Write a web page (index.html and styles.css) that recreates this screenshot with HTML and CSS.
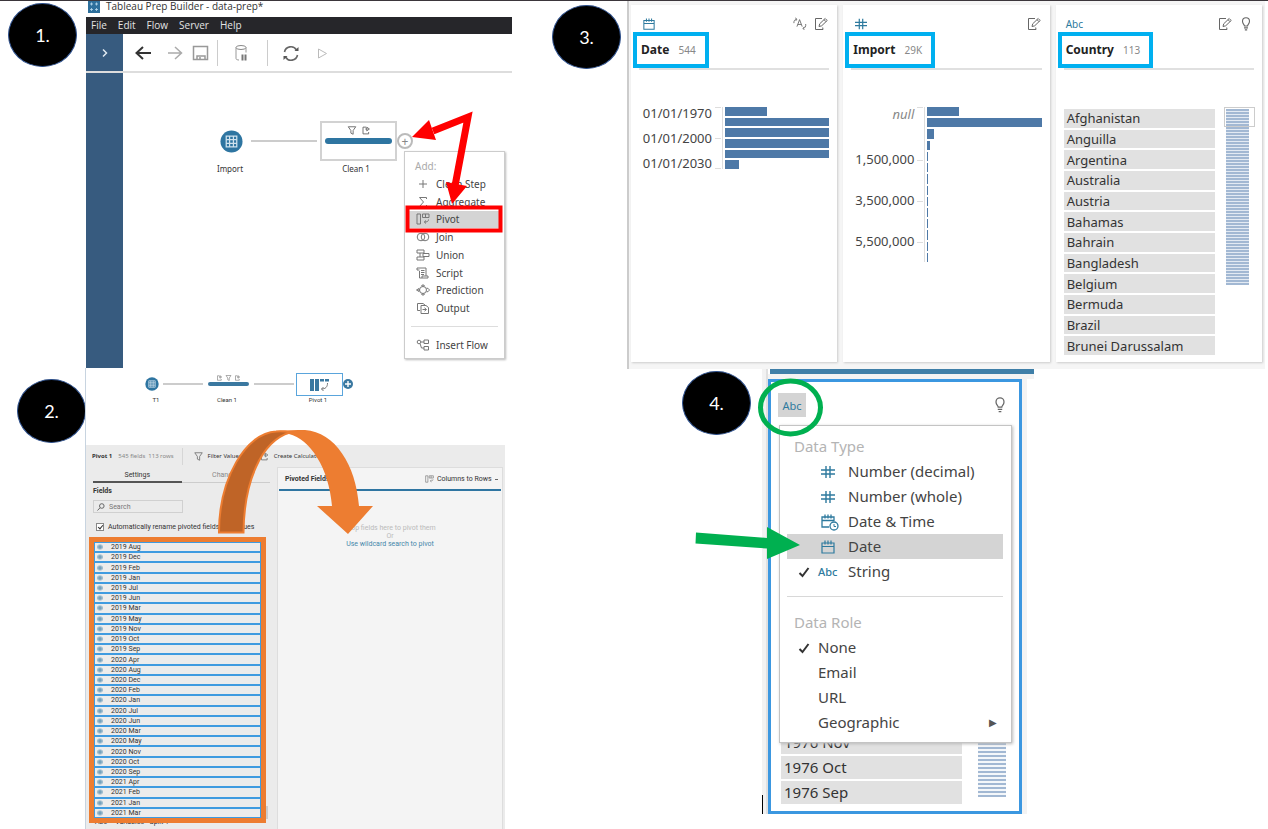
FILE: index.html
```html
<!DOCTYPE html>
<html lang="en">
<head>
<meta charset="utf-8">
<title>Tableau Prep Builder - data-prep</title>
<link rel="stylesheet" href="styles.css">
</head>
<body>
<svg class="defs" aria-hidden="true">
  <symbol id="i-hash" viewBox="0 0 14 14"><path d="M5 1v12M9 1v12M0 5h14M0 9h14" fill="none" stroke="currentColor" stroke-width="1.4"/></symbol>
  <symbol id="i-cal" viewBox="0 0 14 14"><path d="M1 3h12v10H1zM1 6.500h12M4 .5v4M7 .5v4M10 .5v4" fill="none" stroke="currentColor" stroke-width="1.2"/></symbol>
  <symbol id="i-caltime" viewBox="0 0 18 18"><path d="M8 14H1V4h12v4M1 7.500h12M4 1.500v4M7 1.500v4M10 1.500v4" fill="none" stroke="currentColor" stroke-width="1.3"/><circle cx="13" cy="13" r="4" fill="none" stroke="currentColor" stroke-width="1.3"/><path d="M13 11v2.500h2" fill="none" stroke="currentColor"/></symbol>
  <symbol id="i-edit" viewBox="0 0 14 14"><path d="M8 1.500H1.500v11H9l-.3-2M5 9.500l.7-2.700 5.500-5.300 2 2-5.500 5.300zM10 2.700l2 2" fill="none" stroke="currentColor"/></symbol>
  <symbol id="i-bulb" viewBox="0 0 12 18"><path d="M4 11.500c0-2-2.500-2.500-2.500-6a4.500 4.500 0 0 1 9 0c0 3.500-2.500 4-2.500 6zM3.500 14h5M4.500 16.500h3" fill="none" stroke="currentColor" stroke-width="1.4"/></symbol>
  <symbol id="i-rename" viewBox="0 0 16 14"><path d="M4.500 10 7.500 2l3 8M5.500 7.500h4M1 6c0-3 1-4 3-4.500M2.500 0 4.500 1.500 3 3.500M14.500 7c.3 3-.5 4.500-3 5M13 10.500 11.300 12l1.700 1.800" fill="none" stroke="currentColor"/></symbol>
  <symbol id="i-funnel" viewBox="0 0 12 12"><path d="M1 1h10L7.500 6v5l-3-1.500V6z" fill="none" stroke="currentColor" stroke-width="1.2"/></symbol>
  <symbol id="i-calc" viewBox="0 0 12 12"><path d="M6 1.500H2v9h7.500V8M7 1.500l3.500 2.500L7 6.500zM5 4h3" fill="none" stroke="currentColor" stroke-width="1.2"/></symbol>
  <symbol id="i-table" viewBox="0 0 24 24"><circle cx="12" cy="12" r="11.500" fill="#2e75a1"/><path d="M6.500 6.500h11v11h-11zM6.500 10h11M6.500 14h11M10 6.500v11M14 6.500v11" fill="none" stroke="#cfe2ee" stroke-width="1.3"/></symbol>
  <symbol id="i-pivot" viewBox="0 0 14 12"><path d="M1 1h3.500v10H1zM6.500 1H13v3.500H6.500zM9.500 1v3.500M12.500 6.500c0 2-1.500 2.500-4 2.500M10 7.500 8.300 9l1.700 1.500" fill="none" stroke="currentColor"/></symbol>
  <symbol id="i-plus" viewBox="0 0 14 12"><path d="M7 2v8M3 6h8" fill="none" stroke="currentColor"/></symbol>
  <symbol id="i-sum" viewBox="0 0 14 12"><path d="M10.500 3V1.500h-7L7.500 6l-4 4.500h7V9" fill="none" stroke="currentColor"/></symbol>
  <symbol id="i-join" viewBox="0 0 14 12"><circle cx="5" cy="6" r="3.800" fill="none" stroke="currentColor"/><circle cx="9" cy="6" r="3.800" fill="none" stroke="currentColor"/></symbol>
  <symbol id="i-union" viewBox="0 0 14 12"><path d="M1 1h7v3H1zM1 8h7v3H1zM7 4.500h6v3H7zM4 4v4" fill="none" stroke="currentColor"/></symbol>
  <symbol id="i-script" viewBox="0 0 14 12"><path d="M3.500 4V11H12V9H6v2M3.500 3H1V1h9v8M5 3.500h3.500M5 5.500h3.500M5 7.500h3" fill="none" stroke="currentColor"/></symbol>
  <symbol id="i-predict" viewBox="0 0 14 12"><circle cx="7" cy="6" r="3.500" fill="none" stroke="currentColor"/><path d="M7 .5 5.500 2h3zM7 11.500 5.500 10h3zM.5 6 3 4.500v3zM10.500 4.300h1.500L13.500 6 12 7.700h-1.500" fill="none" stroke="currentColor"/></symbol>
  <symbol id="i-output" viewBox="0 0 14 12"><path d="M4 8.500H1.500v-7H7L9 3M5 3.500h5l2.500 2v6H5zM6.500 7.500H10M8.500 5.800l2 1.700-2 1.700" fill="none" stroke="currentColor"/></symbol>
  <symbol id="i-insert" viewBox="0 0 14 12"><circle cx="3" cy="3" r="1.800" fill="none" stroke="currentColor"/><path d="M8 1h4.500v3.500H8zM8 7.500h4.500V11H8zM5 3h3M4 4.500 5.500 9H8" fill="none" stroke="currentColor"/></symbol>
  <symbol id="i-check" viewBox="0 0 12 12"><path d="M1.500 7 4.500 10 10.500 2" fill="none" stroke="currentColor" stroke-width="2"/></symbol>
</svg>
<main class="board">
  <div class="column">
    <section class="step step-one">
      <div class="badge">1.</div>
      <div class="window">
        <header class="titlebar">
          <svg class="app-icon" viewBox="0 0 12 12"><rect width="12" height="12" fill="#2d6f9c"/><path d="M2 3h3M3.500 1.500v3M7 3h3M8.500 1.500v3M2 8.500h3M3.500 7v3M7 8.500h3M8.500 7v3" stroke="#b9dbef" stroke-width=".8"/></svg>
          <span>Tableau Prep Builder - data-prep*</span>
        </header>
        <nav class="menubar"><button>File</button><button>Edit</button><button>Flow</button><button>Server</button><button>Help</button></nav>
        <div class="toolbar">
          <button class="expand" aria-label="Expand"><svg viewBox="0 0 8 10" width="8" height="10"><path d="M2 1.500 5.500 5 2 8.500" fill="none" stroke="#dfe8f0" stroke-width="1.500"/></svg></button>
          <svg class="tools" viewBox="123 34 240 37" width="240" height="37" fill="none">
            <path d="M151 53h-14M143 47l-6.500 6 6.500 6" stroke="#333" stroke-width="2"/>
            <path d="M168 53h13M175 47l6.500 6-6.500 6" stroke="#aaa" stroke-width="1.500"/>
            <path d="M193.500 46.500h14v13h-14zM197 60v-4h8v4M200 57v3" stroke="#999" stroke-width="1.500"/>
            <path d="M217.500 40v26M267.500 40v26" stroke="#ccc"/>
            <ellipse cx="241" cy="47.500" rx="5" ry="2" stroke="#888"/><path d="M236 47.500v11c0 1 1.500 1.500 3 1.500M246 47.500v5" stroke="#999"/><path d="M242.500 54.500v6M245.500 54.500v6" stroke="#777" stroke-width="2"/>
            <path d="M284.500 52a6.500 6.500 0 0 1 12-2M297.500 55a6.500 6.500 0 0 1-12 2" stroke="#666" stroke-width="1.600"/><path d="M298.500 47v4h-4zM283.500 60v-4h4z" fill="#555"/>
            <path d="M318.500 49l8 4.500-8 4.500z" stroke="#bbb"/>
          </svg>
        </div>
        <div class="workspace">
          <div class="rail"></div>
          <div class="canvas canvas-one">
            <svg class="node import-node"><use href="#i-table"/></svg>
            <span class="node-label import-label">Import</span>
            <span class="edge edge-one"></span>
            <div class="clean-node">
              <span class="clean-icons"><svg><use href="#i-funnel"/></svg><svg><use href="#i-calc"/></svg></span>
              <span class="clean-bar"></span>
            </div>
            <span class="node-label clean-label">Clean 1</span>
            <button class="add" aria-label="Add step">+</button>
            <div class="add-menu">
              <h2>Add:</h2>
              <div class="add-items">
                <button><svg><use href="#i-plus"/></svg>Clean Step</button>
                <button><svg><use href="#i-sum"/></svg>Aggregate</button>
                <button class="chosen"><svg><use href="#i-pivot"/></svg>Pivot</button>
                <button><svg><use href="#i-join"/></svg>Join</button>
                <button><svg><use href="#i-union"/></svg>Union</button>
                <button><svg><use href="#i-script"/></svg>Script</button>
                <button><svg><use href="#i-predict"/></svg>Prediction</button>
                <button><svg><use href="#i-output"/></svg>Output</button>
              </div>
              <div class="add-items insert"><button><svg><use href="#i-insert"/></svg>Insert Flow</button></div>
            </div>
            <svg class="marks" viewBox="123 73 389 295" width="389" height="295">
              <rect x="407.500" y="207.500" width="93" height="23" fill="none" stroke="#f00" stroke-width="4"/>
              <path d="M433 131 468 117 455 186" fill="none" stroke="#f00" stroke-width="7"/>
              <path d="M412 137 429 120 436 140zM452 204 446 182 467 186z" fill="#f00"/>
            </svg>
          </div>
        </div>
      </div>
    </section>
    <section class="step step-two">
      <div class="badge">2.</div>
      <div class="prep">
        <div class="canvas canvas-two">
          <svg class="node t1-node"><use href="#i-table"/></svg>
          <span class="node-label t1-label">T1</span>
          <span class="edge edge-a"></span>
          <span class="mini-icons"><svg><use href="#i-calc"/></svg><svg><use href="#i-funnel"/></svg><svg><use href="#i-calc"/></svg></span>
          <span class="mini-bar"></span>
          <span class="node-label clean2-label">Clean 1</span>
          <span class="edge edge-b"></span>
          <div class="pivot-node"><svg viewBox="0 0 20 14" width="20" height="14"><path d="M0 1h4v12H0zM5 1h4v12H5zM10 1h4v2.500h-4zM15 1h4v2.500h-4z" fill="#3a78a0"/><path d="M17.500 5c0 4-2 6-6 6M13.500 9l-2 2 2 2" fill="none" stroke="#777"/></svg></div>
          <svg class="node plus-node" viewBox="0 0 10 10"><circle cx="5" cy="5" r="5" fill="#3a78a0"/><path d="M5 2v6M2 5h6" stroke="#fff" stroke-width="1.400"/></svg>
          <span class="node-label pivot-label">Pivot 1</span>
        </div>
        <header class="profile-bar">
          <strong>Pivot 1</strong><span class="meta">545 fields</span><span class="meta">113 rows</span>
          <button class="filter"><svg><use href="#i-funnel"/></svg>Filter Values</button>
          <button><svg><use href="#i-calc"/></svg>Create Calculated</button>
        </header>
        <div class="panes">
          <div class="settings">
            <nav class="tabs"><button class="on">Settings</button><button>Changes</button></nav>
            <label class="fields-title" for="search">Fields</label>
            <div class="search"><svg viewBox="0 0 8 8" width="8" height="8"><circle cx="4.800" cy="3" r="2.300" fill="none" stroke="#666"/><path d="M3 4.800.5 7.500" stroke="#666"/></svg><input id="search" type="text" placeholder="Search"></div>
            <label class="rename"><input type="checkbox" checked><span>Automatically rename pivoted fields and values</span></label>
            <div class="field-list" id="fields"></div>
            <div class="next-field"><span>Abc</span>Variables - Split 1</div>
            <span class="scroll-thumb"></span>
          </div>
          <div class="pivoted">
            <div class="pivoted-head"><strong>Pivoted Fields</strong>
              <label class="mode"><svg><use href="#i-pivot"/></svg><select aria-label="Pivot type"><option>Columns to Rows</option></select></label>
            </div>
            <div class="drop"><p>Drop fields here to pivot them</p><p>Or</p><a href="#search">Use wildcard search to pivot</a></div>
          </div>
        </div>
        <svg class="marks" viewBox="85 368 420 461" width="420" height="461">
          <path d="M276 431C286 430 296 430 305 430 335 432 356 465 359 506H373L348 534 317 506H332C329 468 310 439 289 434z" fill="#ed7d31"/>
          <path d="M219 532.500C219 478 246 433 276 431.500 281 431 286 431.500 290 432.500 261 441 244 482 243.500 532.500z" fill="#bf6427" stroke="#ed7d31" stroke-width="2"/>
        </svg>
      </div>
    </section>
  </div>
  <div class="column">
    <section class="step step-three">
      <div class="badge">3.</div>
      <div class="cards">
        <article class="card">
          <div class="card-top"><svg class="type"><use href="#i-cal"/></svg><span class="actions"><svg class="wide"><use href="#i-rename"/></svg><svg><use href="#i-edit"/></svg></span></div>
          <h2><span class="framed">Date <small>544</small></span></h2>
          <div class="chart date-chart">
            <div class="axis-labels"><span>01/01/1970</span><span>01/01/2000</span><span>01/01/2030</span></div>
            <div class="ticks"><i></i><i></i><i></i></div>
            <div class="bars" id="date-bars"></div>
          </div>
        </article>
        <article class="card">
          <div class="card-top"><svg class="type"><use href="#i-hash"/></svg><span class="actions"><svg><use href="#i-edit"/></svg></span></div>
          <h2><span class="framed">Import <small>29K</small></span></h2>
          <div class="chart import-chart">
            <div class="axis-labels"><em>null</em><span>1,500,000</span><span>3,500,000</span><span>5,500,000</span></div>
            <div class="ticks"><i></i><i></i><i></i><i></i></div>
            <div class="bars" id="import-bars"></div>
          </div>
        </article>
        <article class="card">
          <div class="card-top"><span class="abc">Abc</span><span class="actions"><svg><use href="#i-edit"/></svg><svg><use href="#i-bulb"/></svg></span></div>
          <h2><span class="framed">Country <small>113</small></span></h2>
          <div class="values">
            <div class="countries">
              <button>Afghanistan</button><button>Anguilla</button><button>Argentina</button><button>Australia</button><button>Austria</button><button>Bahamas</button><button>Bahrain</button><button>Bangladesh</button><button>Belgium</button><button>Bermuda</button><button>Brazil</button><button>Brunei Darussalam</button>
            </div>
            <div class="minimap"><span class="view"></span></div>
          </div>
        </article>
      </div>
    </section>
    <section class="step step-four">
      <div class="badge">4.</div>
      <div class="gutter"><span class="caret"></span></div>
      <div class="type-pane">
        <div class="blue-strip"></div>
        <div class="pane-row">
          <div class="type-card">
            <div class="type-top"><button class="abc-button">Abc</button><svg><use href="#i-bulb"/></svg></div>
            <div class="type-values">
              <div class="months"><button>1976 Nov</button><button>1976 Oct</button><button>1976 Sep</button></div>
              <div class="month-map"></div>
            </div>
            <div class="type-menu">
              <h2>Data Type</h2>
              <button><i></i><svg><use href="#i-hash"/></svg>Number (decimal)</button>
              <button><i></i><svg><use href="#i-hash"/></svg>Number (whole)</button>
              <button><i></i><svg class="big"><use href="#i-caltime"/></svg>Date &amp; Time</button>
              <button class="chosen"><i></i><svg><use href="#i-cal"/></svg>Date</button>
              <button><i><svg><use href="#i-check"/></svg></i><b>Abc</b>String</button>
              <hr>
              <h2>Data Role</h2>
              <button><i><svg><use href="#i-check"/></svg></i>None</button>
              <button><i></i>Email</button>
              <button><i></i>URL</button>
              <button><i></i>Geographic<span class="more">▶</span></button>
            </div>
          </div>
          <div class="next-card"></div>
        </div>
        <svg class="marks" viewBox="690 369 344 445" width="344" height="445">
          <ellipse cx="790.500" cy="407.500" rx="30" ry="26.500" fill="none" stroke="#00b050" stroke-width="5"/>
          <path d="M696 532.500 767 538V527L800 545 767 559V548.500L695.500 543.500z" fill="#00b050"/>
        </svg>
      </div>
    </section>
  </div>
</main>
<script src="app.js"></script>
</body>
</html>
```

FILE: styles.css
```css
* { box-sizing: border-box; }
body { margin: 0; background: #fff; color: #333; font-family: "Noto Sans", sans-serif; font-size: 13px; border-top: 1px solid #3b363b; }
button { margin: 0; padding: 0; border: 0; background: none; color: inherit; font: inherit; text-align: left; white-space: nowrap; }
h2, p { margin: 0; font-weight: normal; }
.defs { display: none; }
.marks { position: absolute; pointer-events: none; z-index: 2; }
.board { display: grid; grid-template-columns: 512px minmax(0, 1fr); }
.step { display: flex; align-items: flex-start; }
.badge { flex: none; width: 69px; height: 64px; border: 1px solid #2f528f; border-radius: 50%; background: #000; color: #fff; font: 18px/62px Lato, sans-serif; text-align: center; }

/* Step 1 */
.step-one .badge { margin: 2px 8px 0; }
.window { flex: 1; min-width: 0; margin-left: 1px; }
.titlebar { display: flex; align-items: center; gap: 6px; height: 16px; padding: 0 0 5px 2px; font: 10px/11px "Open Sans", sans-serif; }
.app-icon { width: 12px; height: 12px; }
.menubar { display: flex; gap: 11px; height: 17px; padding-left: 5px; background: #26262a; color: #e4e4e4; font: 10px/17px "Open Sans", sans-serif; }
.toolbar { display: flex; border-bottom: 2px solid #ddd; height: 39px; }
.expand { width: 37px; background: #375b7f; display: flex; align-items: center; justify-content: center; }
.workspace { display: flex; height: 295px; }
.rail { width: 37px; background: #375b7f; }
.canvas { position: relative; flex: 1; }
.canvas .marks { left: 0; top: 0; }
.node { position: absolute; }
.node-label { position: absolute; transform: translateX(-50%); font-size: 8px; line-height: 10px; white-space: nowrap; }
.edge { position: absolute; height: 2px; background: #ccc; }
.import-node { left: 97px; top: 57px; width: 23px; height: 23px; }
.import-label { left: 107px; top: 91px; }
.edge-one { left: 128px; top: 67px; width: 66px; }
.clean-node { position: absolute; left: 197px; top: 48px; width: 77px; height: 40px; border: 2px solid #d2d2d2; padding: 3px; }
.clean-icons { display: flex; gap: 4px; justify-content: center; height: 12px; }
.clean-icons svg { width: 10px; height: 9px; color: #666; }
.clean-bar { display: block; height: 6px; border-radius: 3px; background: #2e75a1; }
.clean-label { left: 233px; top: 91px; }
.add { position: absolute; left: 274px; top: 60px; width: 16px; height: 16px; border: 2px solid #bbb; border-radius: 50%; background: #fff; color: #888; font-size: 12px; line-height: 11px; text-align: center; }
.add-menu { position: absolute; left: 281px; top: 78px; width: 101px; border: 1px solid #ccc; box-shadow: 1px 1px 2px #bbb; background: #fff; padding: 5px 3px 5px; font-size: 10px; color: #444; }
.add-menu h2 { font-size: 10px; line-height: 18px; color: #aaa; padding-left: 7px; }
.add-items { display: grid; grid-auto-rows: 1fr; height: 142px; }
.add-items button { display: flex; align-items: center; gap: 6px; padding-left: 8px; }
.add-items svg { width: 14px; height: 12px; color: #777; }
.add-items .chosen { background: #d4d4d4; }
.add-menu .insert { height: 27px; border-top: 1px solid #ddd; padding: 9px 0 0; margin: 9px 3px 0; }
.insert button { padding-left: 5px; }

/* Step 2 */
.step-two .badge { margin: 11px -1px 0 17px; }
.prep { position: relative; width: 420px; height: 461px; overflow: hidden; border-left: 1px solid #c8d4e0; display: flex; flex-direction: column; font-family: Roboto, sans-serif; font-size: 7px; }
.prep .marks { left: -1px; top: 0; }
.canvas-two { flex: none; height: 77px; }
.prep .node-label { font-size: 6px; line-height: 8px; }
.t1-node { left: 59px; top: 9px; width: 14px; height: 14px; }
.t1-label { left: 70px; top: 28px; }
.edge-a { left: 77px; top: 15px; width: 40px; }
.edge-b { left: 168px; top: 15px; width: 40px; }
.mini-icons { position: absolute; left: 122px; width: 41px; top: 7px; display: flex; justify-content: center; gap: 2px; color: #777; }
.mini-icons svg { width: 7px; height: 6px; }
.mini-bar { position: absolute; left: 122px; top: 14px; width: 41px; height: 4px; border-radius: 2px; background: #3a78a0; }
.clean2-label { left: 141px; top: 28px; }
.pivot-node { position: absolute; left: 210px; top: 5px; width: 47px; height: 23px; border: 1px solid #5aa5dc; display: flex; align-items: center; justify-content: center; }
.plus-node { left: 257px; top: 11px; width: 10px; height: 10px; }
.pivot-label { left: 232px; top: 28px; }
.profile-bar { flex: none; display: flex; align-items: center; gap: 6px; height: 22px; padding-left: 6px; background: #ebebeb; font: 6px/8px "Noto Sans", sans-serif; white-space: nowrap; }
.profile-bar strong { font-size: 6px; }
.profile-bar .meta { color: #888; }
.profile-bar .meta + .meta { margin-left: -3px; }
.profile-bar button { display: flex; align-items: center; gap: 5px; }
.profile-bar button svg { width: 9px; height: 9px; color: #777; }
.profile-bar .filter { border-left: 1px solid #d6d6d6; padding: 4px 12px 4px 11px; margin-left: 2px; }
.panes { flex: 1; display: flex; background: #ebebeb; min-height: 0; }
.settings { position: relative; width: 191px; padding: 0 7px; }
.tabs { display: grid; grid-template-columns: 1fr 1fr; font-size: 7px; line-height: 14px; height: 16px; }
.tabs button { text-align: center; border-bottom: 1px solid #ccc; height: 16px; padding-top: 1px; color: #888; }
.tabs .on { border-color: #555; border-bottom-width: 2px; color: #333; }
.fields-title { display: block; font-weight: bold; line-height: 17px; }
.search { display: flex; align-items: center; gap: 4px; width: 90px; height: 13px; border: 1px solid #d0d0d0; padding-left: 3px; }
.search input { width: 70px; border: 0; padding: 0; background: none; font: 7px/10px Roboto, sans-serif; outline: 0; }
.search input::placeholder { color: #777; }
.rename { display: flex; align-items: center; gap: 4px; height: 15px; margin: 6px 0 3px 3px; white-space: nowrap; }
.rename input { appearance: none; flex: none; width: 8px; height: 8px; margin: 0; border: 1px solid #888; background: #fff; }
.rename input::before { content: ""; display: block; width: 2px; height: 4px; margin: 0 0 0 2px; border: solid #333; border-width: 0 1px 1px 0; transform: rotate(40deg); }
.field-list { position: relative; z-index: 1; display: grid; grid-auto-rows: 1fr; height: 286px; width: 177px; margin-left: -4px; border: 5px solid #ed7d31; background: #eee; line-height: 8px; }
.field-list button { display: flex; align-items: center; gap: 8px; border: 1px solid #3f9be0; background: #ececec; padding-left: 2px; min-height: 0; }
.field-list svg { width: 6px; height: 6px; color: #2e75a1; }
.next-field { display: flex; gap: 8px; line-height: 8px; margin-top: -5px; padding-left: 2px; }
.scroll-thumb { position: absolute; right: 9px; bottom: 10px; width: 3px; height: 13px; background: #ccc; }
.pivoted { width: 226px; background: #f4f4f4; border: 1px solid #ddd; border-bottom: 0; }
.pivoted-head { display: flex; justify-content: space-between; align-items: center; height: 23px; margin: 0 1px; padding-left: 6px; border-bottom: 2px solid #2e75a1; }
.mode { display: flex; align-items: center; gap: 3px; }
.mode svg { width: 9px; height: 8px; color: #777; }
.mode select { appearance: none; border: 0; width: 64px; padding: 0; font: 7px/10px Roboto, sans-serif; color: #333; background: linear-gradient(#666, #666) 58px 5px / 3px 1px no-repeat; }
.drop { padding-top: 33px; text-align: center; line-height: 8px; color: #bbb; }
.drop a { color: #4587aa; text-decoration: none; }

/* Step 3 */
.step-three { height: 368px; }
.step-three .badge { margin: 4px 6px 0 40px; }
.cards { flex: 1; min-width: 0; display: grid; grid-template-columns: repeat(3, minmax(0, 1fr)); gap: 6px; height: 368px; margin-right: 3px; padding: 4px 3px 7px 2px; border-left: 2px solid #ccc; background: #f5f5f5; }
.card { background: #fff; box-shadow: 1px 1px 2px #ccc; padding: 10px 8px 6px; }
.card-top { display: flex; justify-content: space-between; align-items: center; height: 18px; padding: 0 1px 0 4px; color: #666; }
.card-top .type { width: 12px; height: 12px; color: #2e7a9e; }
.abc { margin-left: -2px; font-size: 10px; color: #2e7a9e; }
.actions { display: flex; gap: 7px; }
.actions svg { width: 14px; height: 14px; }
.card h2 { height: 37px; border-bottom: 2px solid #e0e0e0; }
.framed { display: inline-block; height: 36px; margin: -1px 0 0 -6px; padding: 0 9px 0 4px; border: 4px solid #00b0f0; background: #fff; font-size: 12px; font-weight: bold; line-height: 28px; color: #222; position: relative; }
.framed small { margin-left: 6px; font-size: 10px; font-weight: normal; color: #888; }
.chart { display: flex; align-items: flex-start; margin-top: 37px; color: #444; }
.axis-labels { display: flex; flex-direction: column; text-align: right; white-space: nowrap; }
.date-chart .axis-labels { width: 73px; line-height: 25px; margin-top: -6px; }
.import-chart .axis-labels { width: 63px; line-height: 41px; margin-top: -3px; }
.import-chart em { line-height: 20px; margin-bottom: 15px; color: #888; }
.ticks { display: flex; flex-direction: column; justify-content: space-between; width: 8px; margin: 0 2px 0 3px; border-right: 1px solid #ddd; }
.ticks i { width: 6px; height: 1px; background: #ddd; }
.date-chart .ticks { height: 62px; }
.import-chart .ticks { height: 155px; justify-content: flex-start; gap: 40px; }
.import-chart .ticks i:first-child { margin-bottom: 12px; }
.bars { display: grid; grid-auto-rows: 1fr; flex: 1; }
.date-chart .bars { height: 62px; gap: 2px; }
.import-chart .bars { height: 155px; gap: 2px; }
.bars span { background: #4e79a7; }
.values { display: flex; justify-content: space-between; margin-top: 39px; }
.countries { display: grid; grid-auto-rows: 1fr; gap: 2px; height: 246px; width: 151px; color: #333; }
.countries button { background: #e1e1e1; padding-left: 3px; line-height: 18px; min-height: 0; font-size: 13px; }
.minimap { position: relative; width: 23px; height: 176px; margin-right: 5px; background: repeating-linear-gradient(#a2b8d3 0 2px, #e3eaf3 2px 3px); }
.view { position: absolute; left: -2px; top: -2px; width: 31px; height: 20px; border: 1px solid #ccc; }

/* Step 4 */
.step-four .badge { margin: 2px 11px 0 170px; }
.gutter { position: relative; width: 6px; height: 445px; border-right: 2px solid #e0e0e0; background: #f2f2f2; }
.caret { position: absolute; left: 0; bottom: 0; width: 1px; height: 19px; background: #000; }
.type-pane { position: relative; width: 266px; }
.type-pane .marks { right: 0; top: 0; }
.blue-strip { height: 5px; margin-left: 2px; background: #3f7fa8; }
.pane-row { display: flex; padding-top: 5px; background: #f3f3f3; }
.type-card { position: relative; width: 254px; height: 435px; border: 3px solid #3b97e0; background: #fff; display: flex; flex-direction: column; justify-content: space-between; padding: 11px 13px 7px 10px; }
.next-card { flex: 1; margin-left: 5px; background: #fff; }
.type-top { display: flex; justify-content: space-between; align-items: center; }
.type-top svg { width: 12px; height: 16px; color: #666; }
.abc-button { width: 28px; height: 24px; margin-left: -3px; background: #d4d4d4; color: #2e7a9e; font-size: 11px; text-align: center; }
.type-values { display: flex; justify-content: space-between; align-items: flex-start; }
.months { display: grid; gap: 2px; width: 181px; font-size: 15px; }
.months button { height: 23px; padding-left: 3px; line-height: 23px; background: #e1e1e1; }
.month-map { width: 28px; height: 66px; background: repeating-linear-gradient(#a2b8d3 0 2px, #f4f7fa 2px 4px); }
.type-menu { position: absolute; left: 8px; top: 43px; width: 233px; padding: 8px 8px 7px 7px; border: 1px solid #c4c4c4; box-shadow: 1px 1px 3px #bbb; background: #fff; font-size: 15px; line-height: 25px; color: #444; }
.type-menu h2 { padding-left: 7px; font-size: 15px; color: #b4b4b4; }
.type-menu button { display: flex; align-items: center; width: 100%; height: 25px; }
.type-menu button i { width: 31px; padding-left: 11px; line-height: 0; color: #333; }
.type-menu i svg { width: 12px; height: 12px; }
.type-menu button > svg { width: 14px; height: 14px; margin: 0 13px 0 3px; color: #2e7a9e; }
.type-menu button > .big { width: 18px; height: 18px; margin-right: 9px; }
.type-menu b { width: 30px; font-size: 11px; font-weight: 500; color: #2e7a9e; }
.type-menu .chosen { background: #d4d4d4; }
.type-menu hr { margin: 12px 0 13px; border: 0; border-top: 1px solid #d8d8d8; }
.more { margin-left: auto; margin-right: 6px; font-size: 10px; color: #555; }
```

FILE: app.js
```javascript
const months = {
  2019: "Aug Dec Feb Jan Jul Jun Mar May Nov Oct Sep",
  2020: "Apr Aug Dec Feb Jan Jul Jun Mar May Nov Oct Sep",
  2021: "Apr Feb Jan Mar"
};
const list = document.getElementById("fields");
for (const [year, names] of Object.entries(months)) {
  for (const name of names.split(" ")) {
    const field = document.createElement("button");
    field.innerHTML = '<svg><use href="#i-hash"/></svg>' + year + " " + name;
    list.append(field);
  }
}
function drawBars(id, widths) {
  const box = document.getElementById(id);
  for (const width of widths) {
    const bar = document.createElement("span");
    bar.style.width = width + "%";
    box.append(bar);
  }
}
drawBars("date-bars", [40, 100, 100, 100, 100, 13]);
drawBars("import-bars", [28, 100, 6, 2, 1, 1, 1, 1, 1, 1, 1, 1, 1, 1]);
```
